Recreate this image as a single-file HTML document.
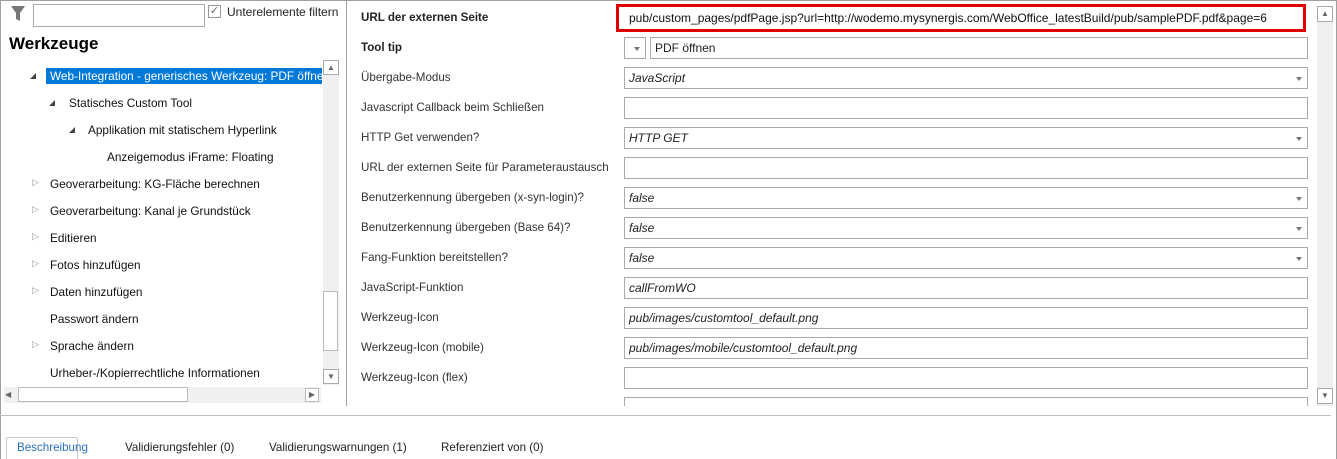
<!DOCTYPE html>
<html><head><meta charset="utf-8"><style>
*{box-sizing:border-box}
body{margin:0;width:1337px;height:459px;overflow:hidden;background:#fff;font-family:"Liberation Sans",sans-serif;font-size:12px;color:#222;position:relative}
.a{position:absolute;white-space:nowrap}
.inp{position:absolute;left:624px;width:684px;height:22px;border:1px solid #ababab;background:#fff;padding:3px 4px;font-size:12px}
.it{font-style:italic}
.dd::after{content:"";position:absolute;right:5px;top:9px;border-left:3px solid transparent;border-right:3px solid transparent;border-top:4px solid #777}
.lbl{position:absolute;left:361px;font-size:11.6px;color:#333;white-space:nowrap}
.tr{position:absolute;font-size:11.8px;color:#111;white-space:nowrap}
.tri{position:absolute;width:0;height:0}
.open{border-left:6px solid transparent;border-bottom:6px solid #444}
.cl{position:absolute;font-size:9px;color:#999}
</style></head><body>
<div class="a" style="left:0;top:0;width:1337px;height:459px;border:1px solid #a0a0a0;border-bottom:none"></div>
<svg class="a" style="left:10px;top:5px" width="16" height="18" viewBox="0 0 16 18"><path d="M1 1H15L10 8V16L6 14V8Z" fill="#777"/></svg>
<div class="a" style="left:33px;top:4px;width:172px;height:23px;border:1px solid #ababab"></div>
<div class="a" style="left:208px;top:5px;width:13px;height:13px;border:1px solid #999;font-size:11px;line-height:11px;text-align:center;color:#666">✓</div>
<div class="a" style="left:227px;top:5px;font-size:12px;color:#222">Unterelemente filtern</div>
<div class="a" style="left:9px;top:34px;font-size:17px;font-weight:bold;color:#000">Werkzeuge</div>
<div class="a" style="left:46px;top:68px;width:276px;height:16px;background:#0078d7;overflow:hidden"><span style="position:absolute;left:4px;top:1px;font-size:11.8px;color:#fff">Web-Integration - generisches Werkzeug: PDF öffnen</span></div>
<div class="tri open a" style="left:30px;top:73px"></div>
<div class="tri open a" style="left:49px;top:100px"></div>
<div class="tr" style="left:69px;top:96px">Statisches Custom Tool</div>
<div class="tri open a" style="left:69px;top:127px"></div>
<div class="tr" style="left:88px;top:123px">Applikation mit statischem Hyperlink</div>
<div class="tr" style="left:107px;top:150px">Anzeigemodus iFrame: Floating</div>
<div class="cl" style="left:32px;top:177px">▷</div><div class="tr" style="left:50px;top:177px">Geoverarbeitung: KG-Fläche berechnen</div>
<div class="cl" style="left:32px;top:204px">▷</div><div class="tr" style="left:50px;top:204px">Geoverarbeitung: Kanal je Grundstück</div>
<div class="cl" style="left:32px;top:231px">▷</div><div class="tr" style="left:50px;top:231px">Editieren</div>
<div class="cl" style="left:32px;top:258px">▷</div><div class="tr" style="left:50px;top:258px">Fotos hinzufügen</div>
<div class="cl" style="left:32px;top:285px">▷</div><div class="tr" style="left:50px;top:285px">Daten hinzufügen</div>
<div class="tr" style="left:50px;top:312px">Passwort ändern</div>
<div class="cl" style="left:32px;top:339px">▷</div><div class="tr" style="left:50px;top:339px">Sprache ändern</div>
<div class="tr" style="left:50px;top:366px">Urheber-/Kopierrechtliche Informationen</div>
<div class="a" style="left:323px;top:60px;width:16px;height:325px;background:#f0f0f0"></div>
<div class="a" style="left:323px;top:60px;width:16px;height:15px;border:1px solid #aaa;background:#fff;font-size:8px;text-align:center;color:#666;line-height:13px">▲</div>
<div class="a" style="left:323px;top:291px;width:15px;height:60px;border:1px solid #bbb;background:#fff"></div>
<div class="a" style="left:323px;top:369px;width:16px;height:15px;border:1px solid #aaa;background:#fff;font-size:8px;text-align:center;color:#666;line-height:13px">▼</div>
<div class="a" style="left:4px;top:387px;width:317px;height:16px;background:#f0f0f0"></div>
<div class="a" style="left:5px;top:388px;width:14px;height:14px;font-size:8px;color:#666;line-height:14px">◀</div>
<div class="a" style="left:18px;top:387px;width:170px;height:15px;border:1px solid #bbb;background:#fff"></div>
<div class="a" style="left:305px;top:388px;width:14px;height:14px;border:1px solid #bbb;background:#fff;font-size:8px;color:#666;line-height:12px;text-align:center">▶</div>
<div class="a" style="left:346px;top:0;width:1px;height:406px;background:#a0a0a0"></div>
<div class="lbl" style="top:11px;font-weight:bold;color:#222">URL der externen Seite</div>
<div class="lbl" style="top:41px;font-weight:bold;color:#222">Tool tip</div>
<div class="lbl" style="top:71px">Übergabe-Modus</div>
<div class="lbl" style="top:101px">Javascript Callback beim Schließen</div>
<div class="lbl" style="top:131px">HTTP Get verwenden?</div>
<div class="lbl" style="top:161px">URL der externen Seite für Parameteraustausch</div>
<div class="lbl" style="top:191px">Benutzerkennung übergeben (x-syn-login)?</div>
<div class="lbl" style="top:221px">Benutzerkennung übergeben (Base 64)?</div>
<div class="lbl" style="top:251px">Fang-Funktion bereitstellen?</div>
<div class="lbl" style="top:281px">JavaScript-Funktion</div>
<div class="lbl" style="top:311px">Werkzeug-Icon</div>
<div class="lbl" style="top:341px">Werkzeug-Icon (mobile)</div>
<div class="lbl" style="top:371px">Werkzeug-Icon (flex)</div>
<div class="a" style="left:616px;top:4px;width:690px;height:28px;border:3px solid #e00000"></div>
<div class="a" style="left:629px;top:11px;font-size:12px;color:#111">pub/custom_pages/pdfPage.jsp?url=http://wodemo.mysynergis.com/WebOffice_latestBuild/pub/samplePDF.pdf&amp;page=6</div>
<div class="a dd" style="left:624px;top:37px;width:22px;height:22px;border:1px solid #ababab"></div>
<div class="inp" style="left:650px;width:658px;top:37px">PDF öffnen</div>
<div class="inp it dd" style="top:67px">JavaScript</div>
<div class="inp" style="top:97px"></div>
<div class="inp it dd" style="top:127px">HTTP GET</div>
<div class="inp" style="top:157px"></div>
<div class="inp it dd" style="top:187px">false</div>
<div class="inp it dd" style="top:217px">false</div>
<div class="inp it dd" style="top:247px">false</div>
<div class="inp it" style="top:277px">callFromWO</div>
<div class="inp it" style="top:307px">pub/images/customtool_default.png</div>
<div class="inp it" style="top:337px">pub/images/mobile/customtool_default.png</div>
<div class="inp" style="top:367px"></div>
<div class="inp" style="top:397px;height:9px;border-bottom:none"></div>
<div class="a" style="left:1317px;top:6px;width:16px;height:400px;background:#f0f0f0"></div>
<div class="a" style="left:1317px;top:6px;width:16px;height:16px;border:1px solid #aaa;background:#fff;font-size:8px;text-align:center;color:#666;line-height:14px">▲</div>
<div class="a" style="left:1317px;top:388px;width:16px;height:16px;border:1px solid #aaa;background:#fff;font-size:8px;text-align:center;color:#666;line-height:14px">▼</div>
<div class="a" style="left:0;top:415px;width:1331px;height:1px;background:#c0c0c0"></div>
<div class="a" style="left:6px;top:437px;width:72px;height:22px;border:1px solid #c8c8c8;border-bottom:none;background:#fff;border-radius:2px 2px 0 0"></div>
<div class="a" style="left:17px;top:441px;color:#2a6ebb;font-size:11.6px">Beschreibung</div>
<div class="a" style="left:125px;top:441px;font-size:11.6px">Validierungsfehler (0)</div>
<div class="a" style="left:269px;top:441px;font-size:11.6px">Validierungswarnungen (1)</div>
<div class="a" style="left:441px;top:441px;font-size:11.6px">Referenziert von (0)</div>
</body></html>
